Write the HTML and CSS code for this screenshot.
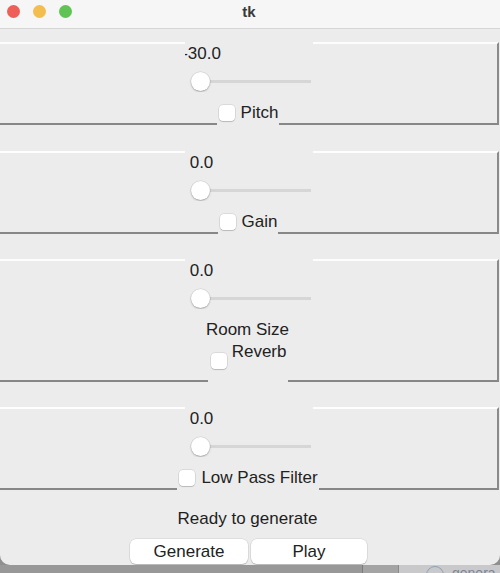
FILE: index.html
```html
<!DOCTYPE html>
<html>
<head>
<meta charset="utf-8">
<title>tk</title>
<link rel="stylesheet" href="styles.css">
</head>
<body>
<div class="window">
  <div class="titlebar">
    <div class="lights">
      <span class="light red"></span>
      <span class="light yellow"></span>
      <span class="light green"></span>
    </div>
    <div class="title">tk</div>
    <div></div>
  </div>
  <div class="content">
    <div class="frame">
      <div class="scale">
        <div class="value"><span>-30.0</span></div>
        <div class="slider"><span class="thumb"></span></div>
      </div>
      <div class="check"><span class="box"></span><span>Pitch</span></div>
    </div>
    <div class="frame f2">
      <div class="scale">
        <div class="value"><span>0.0</span></div>
        <div class="slider"><span class="thumb"></span></div>
      </div>
      <div class="check"><span class="box"></span><span>Gain</span></div>
    </div>
    <div class="frame f3">
      <div class="scale">
        <div class="value"><span>0.0</span></div>
        <div class="slider"><span class="thumb"></span></div>
      </div>
      <div class="reverb">
        <div class="room">Room Size</div>
        <div class="reverb-row"><span class="box"></span><span>Reverb</span></div>
      </div>
    </div>
    <div class="frame f4">
      <div class="scale">
        <div class="value"><span>0.0</span></div>
        <div class="slider"><span class="thumb"></span></div>
      </div>
      <div class="check"><span class="box"></span><span>Low Pass Filter</span></div>
    </div>
    <div class="status">Ready to generate</div>
    <div class="buttons">
      <button class="btn gen">Generate</button>
      <button class="btn play">Play</button>
    </div>
  </div>
</div>
<div class="desktop">
  <div class="seg s1"></div>
  <div class="seg s2"></div>
  <div class="seg s3"><span class="ring"></span><span class="dtext">genera</span></div>
</div>
</body>
</html>
```
FILE: styles.css
```css
html, body {
  margin: 0;
  padding: 0;
}
body {
  width: 500px;
  height: 573px;
  overflow: hidden;
  background: #8f8f8f;
  font-family: "Liberation Sans", Arial, sans-serif;
  font-size: 17px;
  color: #222;
}
.window {
  height: 565px;
  background: #ececec;
  border-radius: 0 0 10px 10px;
  overflow: hidden;
  display: flex;
  flex-direction: column;
}
.titlebar {
  height: 28px;
  flex: none;
  background: #f6f6f6;
  border-bottom: 1px solid #d5d5d5;
  display: grid;
  grid-template-columns: 1fr auto 1fr;
  align-items: center;
}
.lights {
  display: flex;
  gap: 13px;
  padding-left: 7px;
  margin-top: -6px;
}
.light {
  width: 13px;
  height: 13px;
  border-radius: 50%;
  display: block;
}
.red { background: #ee5f57; }
.yellow { background: #f4bd4f; }
.green { background: #5fc454; }
.title {
  font-weight: bold;
  font-size: 15px;
  color: #3a3a3a;
  margin-top: -6px;
  margin-left: -2px;
}
.content {
  display: flex;
  flex-direction: column;
  align-items: center;
  padding-top: 13px;
}
.frame {
  align-self: flex-start;
  margin-left: -2px;
  width: 497px;
  border-top: 2px solid #fdfdfd;
  border-right: 2px solid #8b8b8b;
  border-bottom: 2px solid #878787;
  border-left: 2px solid #878787;
  display: flex;
  flex-direction: column;
  align-items: center;
}
.frame + .frame {
  margin-top: 25px;
}
.f2 { margin-top: 26px !important; }
.scale {
  width: 128px;
  height: 50px;
  margin-top: -2px;
  background: #ececec;
  overflow: hidden;
}
.value {
  width: 34px;
  padding-top: 2px;
  line-height: 20px;
  display: flex;
  justify-content: center;
  white-space: nowrap;
}
.slider {
  margin-top: 8px;
  height: 19px;
  display: flex;
  background: linear-gradient(#d6d6d6, #d6d6d6) no-repeat 6px center / 120px 3px;
}
.thumb {
  margin-left: 6px;
  width: 19px;
  height: 19px;
  border-radius: 50%;
  background: #fff;
  box-shadow: 0 0 0 0.5px rgba(0,0,0,0.12), 0 1px 2px rgba(0,0,0,0.25);
}
.check {
  margin-top: 11px;
  margin-bottom: -2px;
  height: 22px;
  background: #ececec;
  display: flex;
  align-items: flex-start;
  padding: 0 1px 0 2px;
  margin-left: -1px;
  line-height: 20px;
}
.box {
  width: 16px;
  height: 16px;
  margin-top: 2px;
  margin-right: 6px;
  border-radius: 4px;
  background: #fff;
  box-shadow: 0 0 0 0.5px rgba(0,0,0,0.15), 0 1px 1px rgba(0,0,0,0.15);
  flex: none;
}
.reverb {
  margin-top: 11px;
  margin-bottom: -2px;
  height: 62px;
  width: 80px;
  background: #ececec;
  display: flex;
  flex-direction: column;
  align-items: center;
  line-height: 20px;
  margin-left: -2px;
}
.room {
  white-space: nowrap;
}
.reverb-row {
  align-self: stretch;
  margin-top: 2px;
  display: flex;
  justify-content: space-between;
  padding-left: 3px;
  padding-right: 1px;
}
.reverb-row .box {
  margin-top: 11px;
  margin-right: 0;
}
.status {
  margin-top: 19px;
  margin-right: 5px;
  line-height: 20px;
  color: #1e1e1e;
}
.buttons {
  margin-top: 10px;
  display: flex;
  gap: 3px;
  margin-left: -3px;
}
.btn {
  height: 25px;
  border: none;
  border-radius: 6px;
  background: #fff;
  font-family: inherit;
  font-size: 17px;
  color: #222;
  padding: 0;
  box-shadow: 0 0 0 0.5px rgba(0,0,0,0.12), 0 1px 1px rgba(0,0,0,0.18);
}
.gen { width: 118px; }
.play { width: 116px; }
.desktop {
  height: 8px;
  display: flex;
}
.seg { height: 8px; }
.s1 { width: 362px; background: #989898; border-right: 1px solid #7c7c7c; }
.s2 { width: 35px; background: #a4a4a4; border-right: 1px solid #8a8a8a; }
.s3 {
  flex: 1;
  background: #c9c9cb;
  display: flex;
  overflow: hidden;
  align-items: flex-start;
  gap: 8px;
  padding-left: 27px;
}
.ring {
  width: 16px;
  height: 16px;
  border-radius: 50%;
  border: 1.5px solid #8ea0b8;
  margin-top: 1px;
  flex: none;
}
.dtext {
  font-size: 14px;
  color: #7a8594;
  line-height: 14px;
  margin-top: 1px;
  white-space: nowrap;
}
```
